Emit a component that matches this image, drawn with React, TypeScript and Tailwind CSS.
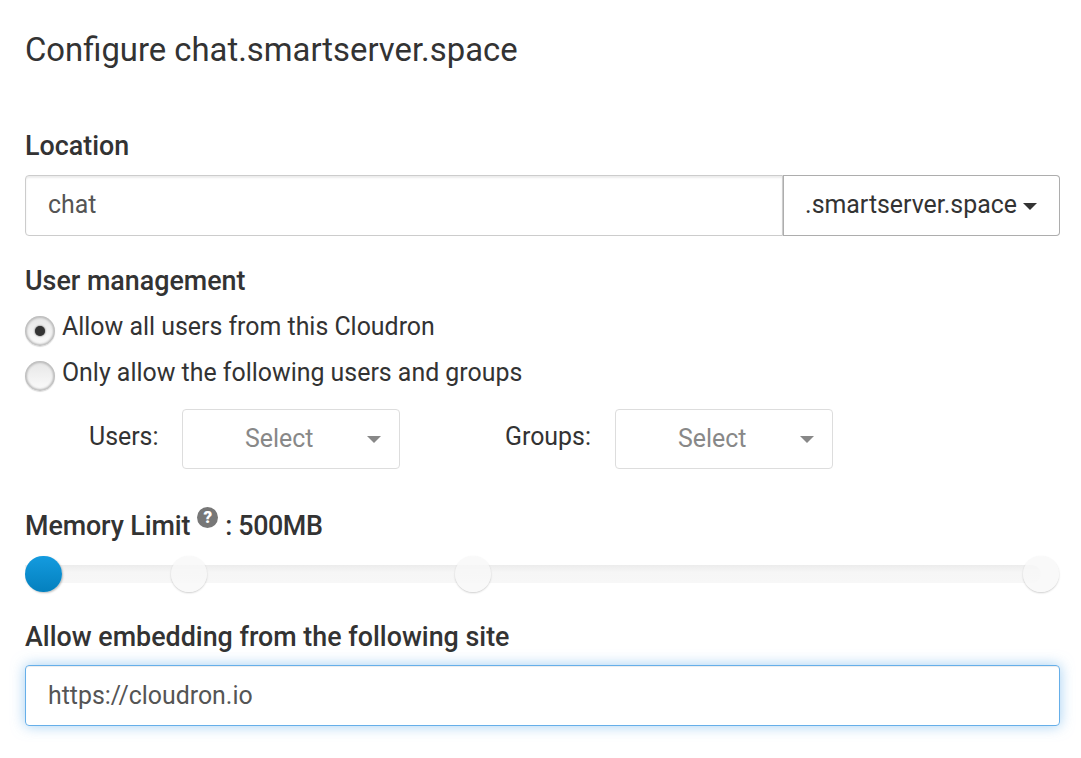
export default function App() {
  const thumbs = [146, 430, 998];
  const radio = "rounded-full bg-[linear-gradient(#e6e6e6,#fbfbfb)] shadow-[inset_0_0_2px_2px_#bdbdbd,0_1px_1px_rgba(0,0,0,0.15)]";
  return (
    <div className="h-[758px] w-[1081px] overflow-hidden bg-white pl-[25px] pr-[21px] text-[#333] font-['Roboto',sans-serif] text-[24.9px] leading-[36px]">
      <h1 className="pt-[31px] h-[128px] text-[32.85px] leading-[38px] font-normal text-[#333]">Configure chat.smartserver.space</h1>

      <label className="block h-[29px] text-[26.85px] font-medium leading-[36px]">Location</label>
      <div className="mt-[18px] flex h-[61px]">
        <div className="flex flex-1 items-center rounded-l-[4px] border border-[#ccc] pb-[2px] pl-[22px] text-[#555] shadow-[inset_0_2px_2px_rgba(0,0,0,0.075)]">chat</div>
        <div className="flex w-[277px] items-center justify-center gap-[6px] rounded-r-[4px] border border-l-0 border-[#adadad] bg-white pb-[2px] text-[#333] shadow-[inset_1px_0_0_#adadad]">
          <span>.smartserver.space</span>
          <span className="mt-[3px] h-0 w-0 border-x-[7px] border-t-[7px] border-x-transparent border-t-[#333]" />
        </div>
      </div>

      <label className="mt-[27px] block text-[26.85px] font-medium leading-[36px]">User management</label>
      <div className="mt-[10px] flex h-[46px] items-start gap-[7px]">
        <span className={`mt-[7px] flex h-[30px] w-[30px] items-center justify-center ${radio}`}>
          <span className="h-[10px] w-[10px] rounded-full bg-[#333] shadow-[0_0_2px_#333]" />
        </span>
        <span className="leading-[36px]">Allow all users from this Cloudron</span>
      </div>
      <div className="flex h-[46px] items-start gap-[7px]">
        <span className={`mt-[6px] h-[30px] w-[30px] ${radio}`} />
        <span className="leading-[36px]">Only allow the following users and groups</span>
      </div>

      <div className="mt-[8px] flex h-[60px] pl-[64px]">
        <span className="w-[93px] pt-[10px]">Users:</span>
        <div className="relative flex h-[60px] w-[218px] items-center rounded-[4px] border border-[#ddd] pl-[62px] text-[#888]">
          Select
          <span className="absolute right-[18px] top-[26px] h-0 w-0 border-x-[7px] border-t-[7px] border-x-transparent border-t-[#888]" />
        </div>
        <span className="ml-[105px] w-[110px] pt-[10px]">Groups:</span>
        <div className="relative flex h-[60px] w-[218px] items-center rounded-[4px] border border-[#ddd] pl-[62px] text-[#888]">
          Select
          <span className="absolute right-[18px] top-[26px] h-0 w-0 border-x-[7px] border-t-[7px] border-x-transparent border-t-[#888]" />
        </div>
      </div>

      <div className="mt-[39px] flex h-[36px] items-center text-[26.85px] font-medium">
        <span className="tracking-[-0.1px]">Memory Limit</span>
        <span className="mx-[7px] mb-[18px] flex h-[21px] w-[21px] items-center justify-center rounded-full bg-[#777] text-[17px] font-black leading-none text-white">?</span>
        <span className="tracking-[-0.4px]">: 500MB</span>
      </div>

      <div className="relative mt-[21px] h-[18px] w-[1016px] rounded-r-full bg-[linear-gradient(#ececec,#f6f6f6_40%,#f7f7f7)]">
        {thumbs.map((left) => (
          <span key={left} style={{ left }} className="absolute top-[-9px] h-[36px] w-[36px] rounded-full bg-[#f7f7f7]/80 shadow-[0_1px_2px_rgba(0,0,0,0.2)]" />
        ))}
        <span className="absolute left-0 top-[-9px] h-[36px] w-[37px] rounded-full bg-[linear-gradient(#149bdf,#0480be)] shadow-[1px_1px_2px_rgba(0,0,0,0.25)]" />
      </div>

      <label className="mt-[36px] block text-[26.85px] font-medium leading-[36px]">Allow embedding from the following site</label>
      <div className="mt-[10px] flex h-[61px] w-[1035px] items-center rounded-[4px] border border-[#66afe9] pl-[22px] text-[#555] shadow-[inset_0_1px_1px_rgba(0,0,0,0.075),0_0_14px_rgba(102,175,233,0.6)]">https://cloudron.io</div>
    </div>
  );
}
